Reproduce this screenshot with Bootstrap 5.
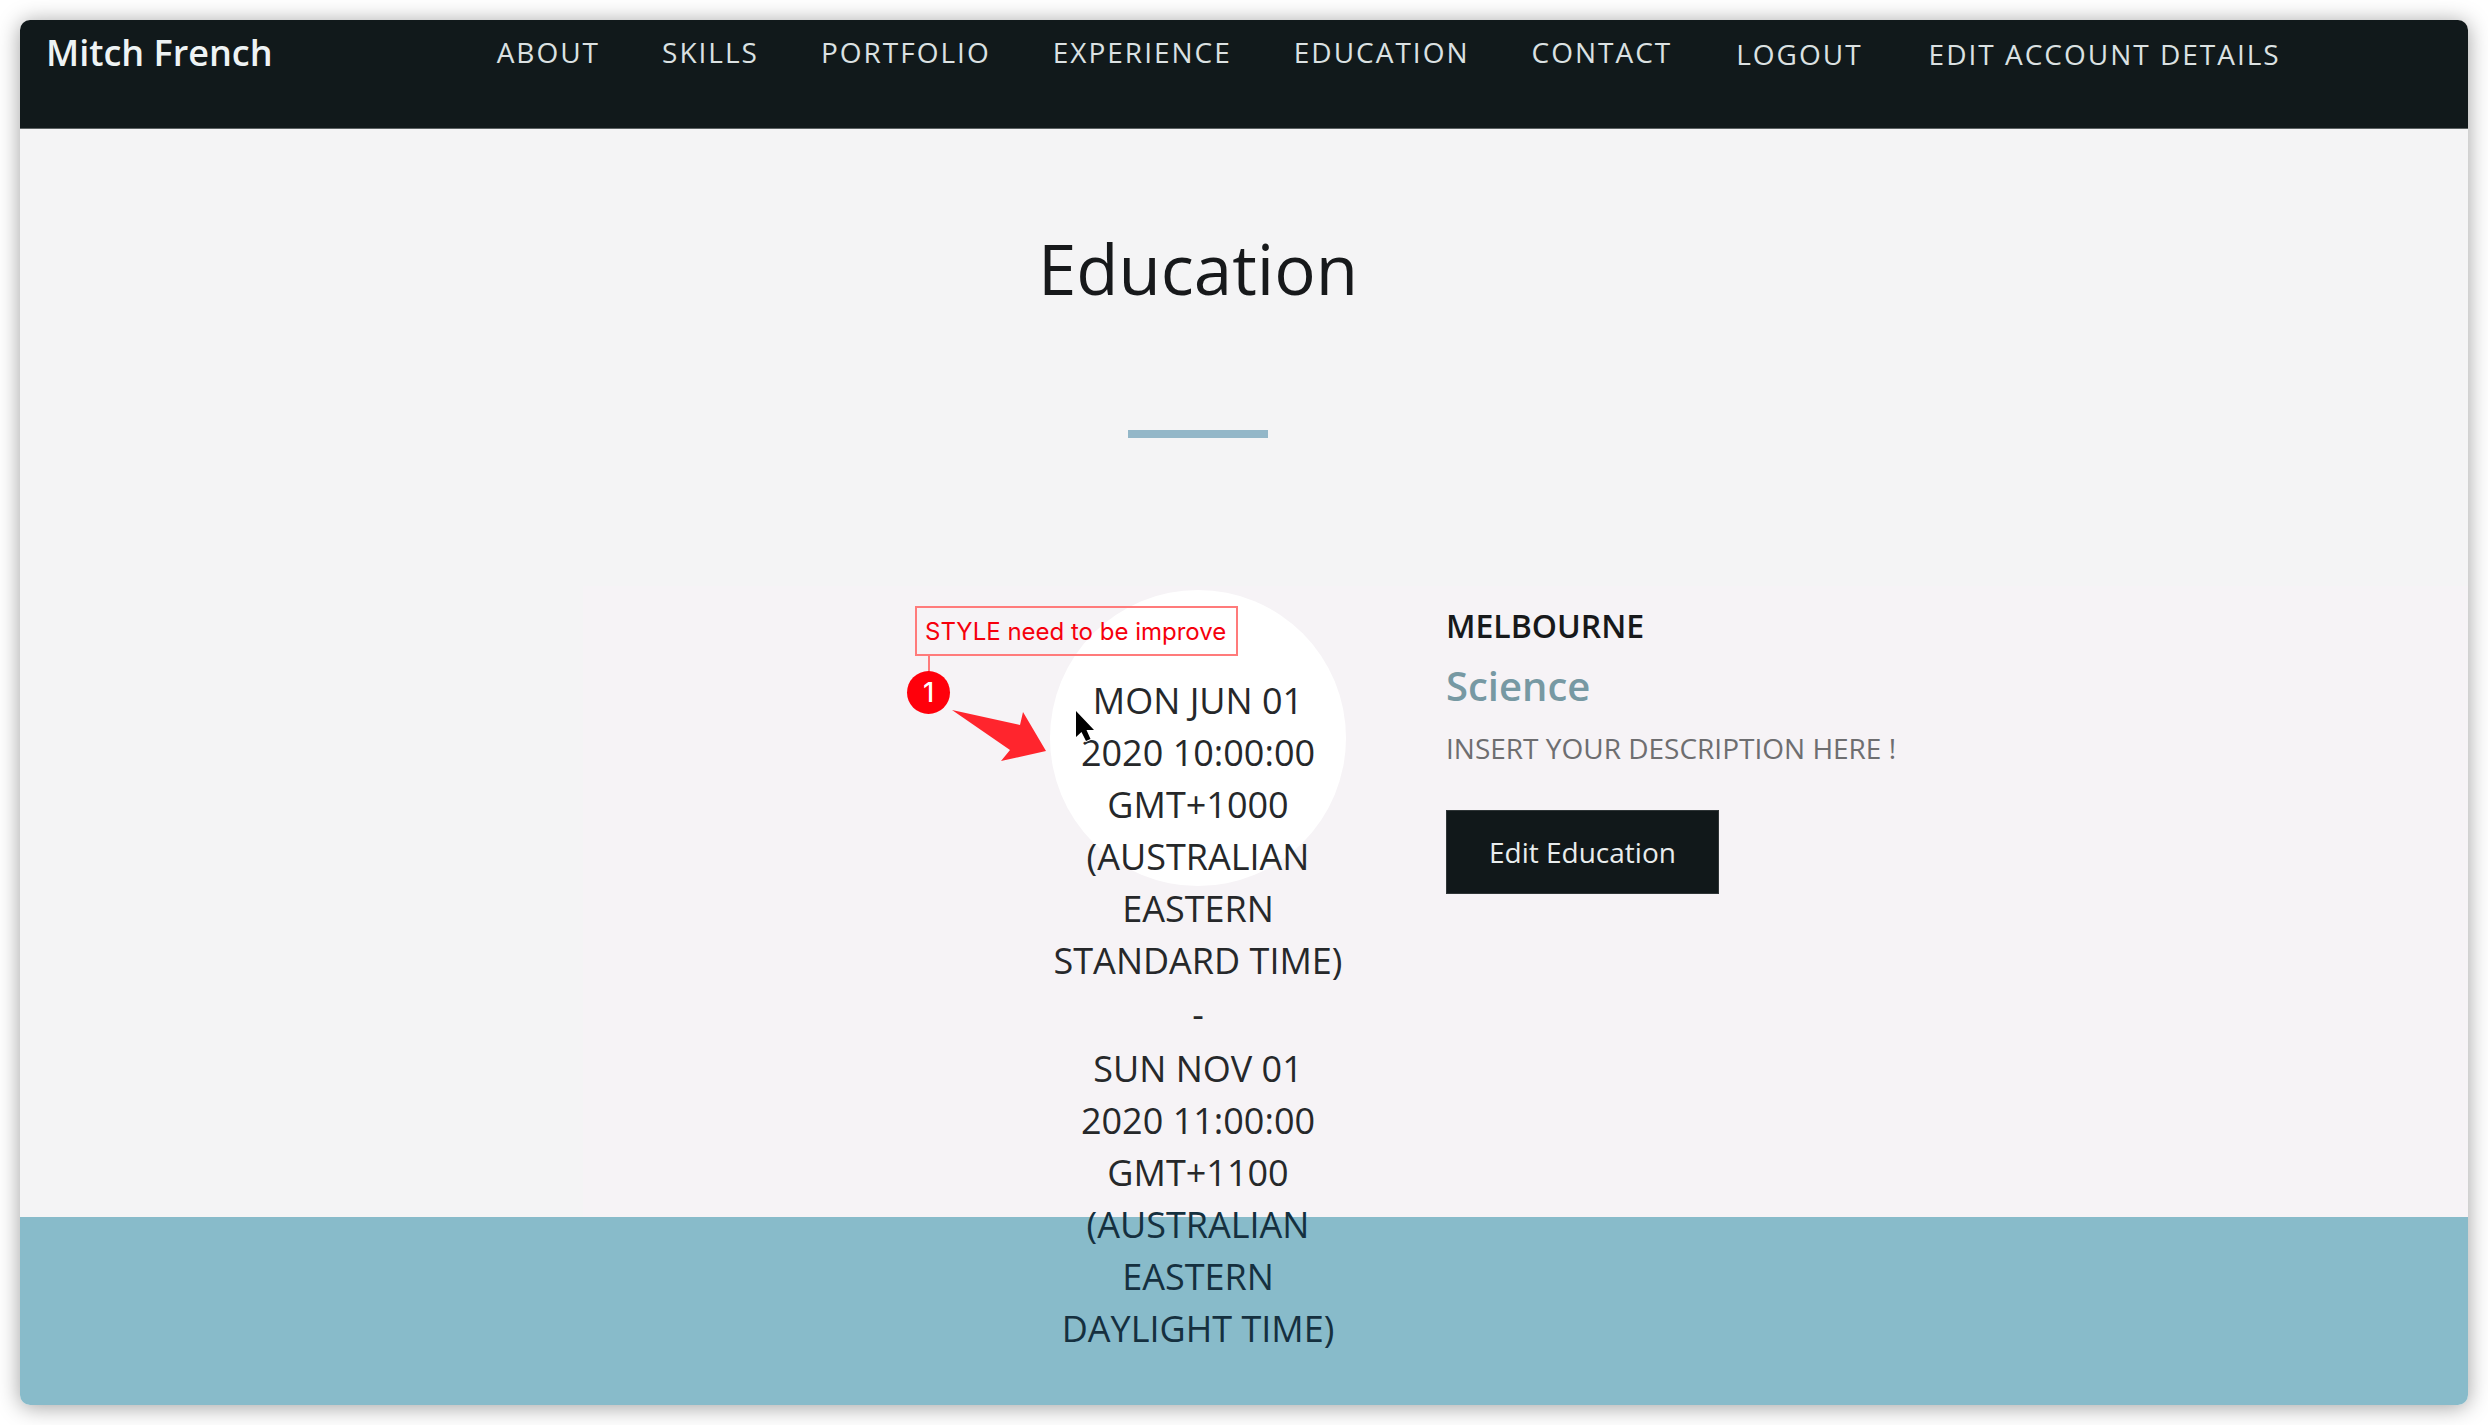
<!DOCTYPE html>
<html lang="en">
<head>
<meta charset="utf-8">
<meta name="viewport" content="width=device-width, initial-scale=1">
<title>Mitch French</title>
<link href="https://cdn.jsdelivr.net/npm/bootstrap@5.3.0/dist/css/bootstrap.min.css" rel="stylesheet">
<style>
  body { font-family: "Open Sans", "Noto Sans", sans-serif; background: #fff; color: #17191b; padding: 20px; }
  .page-frame { border-radius: 10px; box-shadow: 0 2px 22px rgba(0, 0, 0, .38); overflow: hidden; }
  .top-bar { background: #11191b; height: 109px; border-bottom: 1px solid #5c6263; padding: 8px 26px; }
  .top-bar .navbar-brand { font-size: 36px; line-height: 50px; font-weight: 600; color: #eef3f4; padding: 0; margin: 0 224px 0 0; }
  .top-bar .navbar-nav { gap: 62px; }
  .top-bar .nav-link { font-size: 28px; line-height: 48px; letter-spacing: 2px; color: #dbe1e2; padding: 0; white-space: nowrap; }
  .top-bar .account-links { gap: 66px; margin-left: 64px; padding-top: 2px; }
  .edu-section {
    position: relative;
    z-index: 1;
    background: linear-gradient(#f6f3f6, #f6f3f6) no-repeat right bottom / 77% 58%, #f4f4f5;
    padding: 90px 92px 323px 0;
  }
  .edu-title { font-size: 69px; line-height: 98px; font-weight: 400; margin: 0 0 113px; }
  .title-bar { width: 140px; height: 8px; background: #93b7c8; margin: 0 auto 152px; }
  .timeline { display: grid; grid-template-columns: 1fr 296px 1fr; column-gap: 100px; }
  .date-circle { grid-column: 2; width: 296px; height: 296px; border-radius: 50%; background: #fff; padding-top: 85px; }
  .date-text { font-size: 36px; line-height: 52px; color: #26282a; white-space: nowrap; margin: 0; display: flex; flex-direction: column; align-items: center; gap: 2px; }
  .over-band { color: #15303f; }
  .entry { padding-top: 12px; }
  .entry-place { font-size: 32px; line-height: 48px; font-weight: 600; margin: 0 0 4px; }
  .entry-subject { font-size: 40px; line-height: 64px; font-weight: 600; color: #7799a3; margin: 0 0 6px; }
  .entry-note { font-size: 28px; line-height: 48px; color: #6e6e70; margin: 0 0 38px; }
  .edit-btn { font-size: 28px; line-height: 42px; padding: 20px 42px; background: #11181a; color: #e9eded; border: 1px solid #2f3537; border-radius: 0; }
  .edit-btn:hover { background: #2a3335; color: #fff; }
  .blue-band { background: #88bbca; height: 188px; }

  /* review notes drawn over the page */
  .note-layer { position: absolute; left: -144px; top: 10px; }
  .note-box { position: absolute; left: 9px; top: 6px; border: 2px solid #ff7b7b; padding: 8px 10px 6px 8px; font-family: Inter, "Liberation Sans", sans-serif; font-size: 24px; line-height: 32px; color: #f6000c; white-space: nowrap; }
  .note-stem { position: absolute; left: 22px; top: 55px; width: 2px; height: 18px; background: #ff7b7b; }
  .note-number { position: absolute; left: 1px; top: 71px; width: 43px; height: 43px; background: #ff000b; color: #fff; font-family: Inter, "Liberation Sans", sans-serif; font-size: 27px; font-weight: 500; line-height: 43px; }
  .note-arrow { position: absolute; left: 44px; top: 108px; }
  .note-cursor { position: absolute; left: 166px; top: 108px; }
</style>
</head>
<body>
<div class="page-frame">
  <nav class="top-bar d-flex align-items-start" aria-label="Main">
    <a class="navbar-brand" href="#">Mitch French</a>
    <ul class="navbar-nav flex-row">
      <li class="nav-item"><a class="nav-link" href="#about">ABOUT</a></li>
      <li class="nav-item"><a class="nav-link" href="#skills">SKILLS</a></li>
      <li class="nav-item"><a class="nav-link" href="#portfolio">PORTFOLIO</a></li>
      <li class="nav-item"><a class="nav-link" href="#experience">EXPERIENCE</a></li>
      <li class="nav-item"><a class="nav-link" href="#education">EDUCATION</a></li>
      <li class="nav-item"><a class="nav-link" href="#contact">CONTACT</a></li>
    </ul>
    <ul class="navbar-nav account-links flex-row">
      <li class="nav-item"><a class="nav-link" href="#logout">LOGOUT</a></li>
      <li class="nav-item"><a class="nav-link" href="#account">EDIT ACCOUNT DETAILS</a></li>
    </ul>
  </nav>

  <main>
    <section class="edu-section" id="education">
      <h1 class="edu-title text-center">Education</h1>
      <div class="title-bar"></div>
      <div class="timeline">
        <div class="date-circle position-relative text-center">
          <p class="date-text">
            <span>MON JUN 01<br>2020 10:00:00<br>GMT+1000<br>(AUSTRALIAN<br>EASTERN<br>STANDARD TIME)</span>
            <span>-</span>
            <span>SUN NOV 01<br>2020 11:00:00<br>GMT+1100<br><span class="over-band">(AUSTRALIAN<br>EASTERN<br>DAYLIGHT TIME)</span></span>
          </p>
          <div class="note-layer">
            <div class="note-box">STYLE need to be improve</div>
            <div class="note-stem"></div>
            <div class="note-number rounded-circle">1</div>
            <svg class="note-arrow" width="100" height="56" viewBox="0 0 100 56" aria-hidden="true"><path d="M2 2 70 17 73 4 96 43 51 53 60 42Z" fill="#ff252d"/></svg>
            <svg class="note-cursor" width="28" height="36" viewBox="0 0 28 36" aria-hidden="true"><path d="M4 3V29L9.500 24 14 33 18.500 31 14.500 22H22Z" fill="#000" stroke="#fff" stroke-width="2" paint-order="stroke"/></svg>
          </div>
        </div>
        <div class="entry">
          <h2 class="entry-place">MELBOURNE</h2>
          <h3 class="entry-subject">Science</h3>
          <p class="entry-note">INSERT YOUR DESCRIPTION HERE !</p>
          <button type="button" class="btn edit-btn">Edit Education</button>
        </div>
      </div>
    </section>
    <div class="blue-band"></div>
  </main>
</div>
<script src="https://cdn.jsdelivr.net/npm/bootstrap@5.3.0/dist/js/bootstrap.bundle.min.js"></script>
</body>
</html>
